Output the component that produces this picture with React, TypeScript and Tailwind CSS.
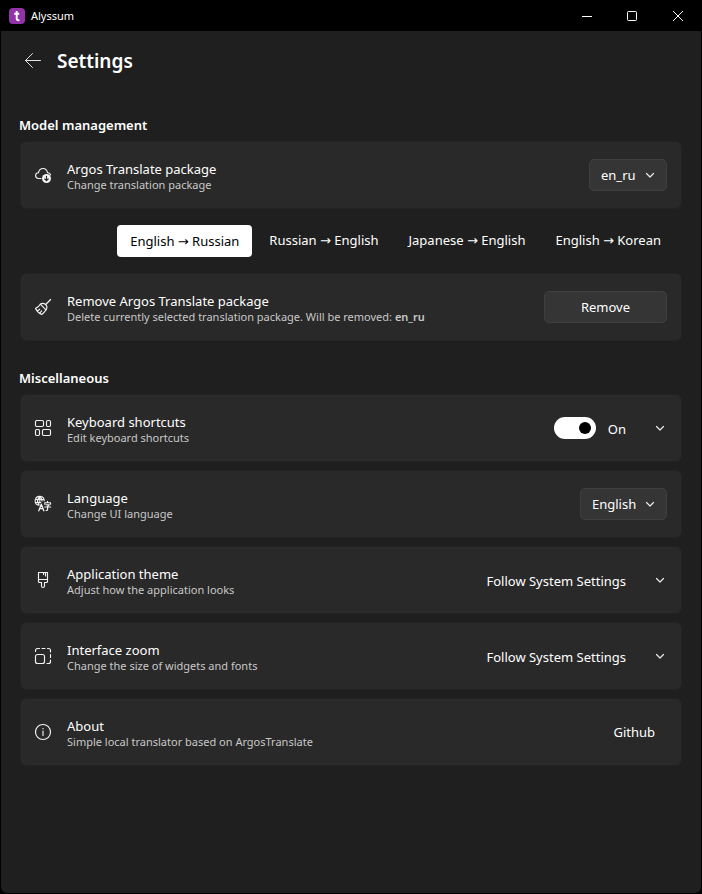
import { useState, type ReactNode } from "react";

type IconProps = { children: ReactNode };

function Icon({ children }: IconProps) {
  return (
    <svg
      className="size-5 shrink-0 text-[#f2f2f2]"
      viewBox="0 0 20 20"
      fill="none"
      stroke="currentColor"
      strokeWidth="1.150"
      strokeLinecap="round"
      strokeLinejoin="round"
      aria-hidden="true"
    >
      {children}
    </svg>
  );
}

const CloudDownIcon = () => (
  <Icon>
    <path d="M8 13.500H5.500A2.900 2.900 0 0 1 5.500 7.700C5.900 5.200 7.700 3.500 10 3.500s4.100 1.700 4.500 4.200c1.500 0 2.700.8 3 2.300" />
    <circle cx="13.500" cy="13.500" r="4.500" fill="currentColor" stroke="none" />
    <path d="M13.500 11.300v4.200M11.800 14l1.700 1.700 1.700-1.700" stroke="#292929" />
  </Icon>
);

const BroomIcon = () => (
  <Icon>
    <path d="M17.600 2.500 12.600 7.500" />
    <path d="M7.300 7.200c1.700-1.200 3.900-.9 5.300.3 1.400 1.400 1.600 3.600.4 5.300-1 1.900-2.300 3.300-4.300 4.600-2.500-1-4.900-3.300-6.100-6 1.800-.8 3.500-2.200 4.700-4.200z" />
    <path d="m7.300 7.200 5.700 5.600M4.700 13.800l2-1.500M6.800 15.900l1.900-2" />
  </Icon>
);

const KeysIcon = () => (
  <Icon>
    <rect x="2.500" y="2.500" width="8" height="6" rx="1.200" />
    <rect x="13.500" y="2.500" width="4" height="6" rx="1.200" />
    <rect x="2.500" y="11.500" width="4" height="6" rx="1.200" />
    <rect x="9.500" y="11.500" width="8" height="6" rx="1.200" />
  </Icon>
);

const LanguageIcon = () => (
  <Icon>
    <path d="M11.200 6.800A4.500 4.500 0 1 0 5.500 11.200M6.800 2.500c-2.600 2.600-2.600 6 -.6 8.500M6.800 2.500c1.600 1.300 2.200 2.600 2.200 4.500M2.600 5.500h8.400M2.600 8.500h5M6.800 2.500v6.500" />
    <path d="m5.800 16.800 2.500-6.600 2.500 6.600M6.700 14.700h3.300" strokeWidth="1.300" />
    <path d="M14.500 7.200v1.300M11.800 10.200V8.700h5.700v1.500M13 10.700h3.300l-1.700 1.500v3.200c0 .8-.5 1.200-1.500 1M11.800 13h5.900" />
  </Icon>
);

const BrushIcon = () => (
  <Icon>
    <path d="M5.500 2.500h9v9c0 .6-.4 1-1 1h-2v3.500a1.500 1.500 0 0 1-3 0v-3.500h-2c-.6 0-1-.4-1-1zM5.500 9.500h9M12.500 2.500V6M10.500 2.500v2" />
  </Icon>
);

const ResizeIcon = () => (
  <Icon>
    <rect x="2.500" y="8.500" width="9" height="9" rx="2" />
    <path d="M2.500 5.500v-1a2 2 0 0 1 2-2H6.500M9 2.500h3M14.500 2.500h1a2 2 0 0 1 2 2V6M17.500 8.500v3M17.500 14v1.500a2 2 0 0 1-2 2H14" />
  </Icon>
);

const InfoIcon = () => (
  <Icon>
    <circle cx="10" cy="10" r="7.500" />
    <path d="M10 9v4.500" />
    <circle cx="10" cy="6.800" r=".7" fill="currentColor" stroke="none" />
  </Icon>
);

function Chevron({ className = "" }: { className?: string }) {
  return (
    <svg
      className={`h-[10px] w-[10px] shrink-0 ${className}`}
      viewBox="0 0 10 10"
      fill="none"
      stroke="#e8e8e8"
      strokeWidth="1.200"
      strokeLinecap="round"
      strokeLinejoin="round"
      aria-hidden="true"
    >
      <path d="m1.500 3.500 3.500 3.500 3.500-3.500" />
    </svg>
  );
}

type CardProps = {
  icon: ReactNode;
  title: string;
  detail: ReactNode;
  children: ReactNode;
};

function Card({ icon, title, detail, children }: CardProps) {
  return (
    <div className="flex h-[68px] items-center rounded-md border border-[#232323] bg-[#292929] pr-[14px] pl-3">
      {icon}
      <div className="ml-[14px] min-w-0 flex-1 pt-[2px]">
        <h3 className="text-[13px] leading-[18px]">{title}</h3>
        <p className="text-[11px] leading-[14px] text-[#c8c8c8]">{detail}</p>
      </div>
      {children}
    </div>
  );
}

function Dropdown({ label, options, className }: { label: string; options: string[]; className: string }) {
  return (
    <div className="relative">
      <select
        aria-label={label}
        className={`h-8 appearance-none rounded-[5px] border border-[#3f3f3f] bg-[#353535] pt-[2px] pl-[11px] text-[13px] text-white ${className}`}
      >
        {options.map((o) => (
          <option key={o}>{o}</option>
        ))}
      </select>
      <Chevron className="pointer-events-none absolute top-[11px] right-3" />
    </div>
  );
}

function Expander({ label, text }: { label: string; text?: string }) {
  return (
    <button type="button" aria-label={label} className="flex items-center pr-[2px] text-[13px] leading-[18px]">
      {text && <span className="pt-[2px]">{text}</span>}
      <Chevron className="ml-[29px]" />
    </button>
  );
}

const pairs = ["English → Russian", "Russian → English", "Japanese → English", "English → Korean"];

export default function App() {
  const [pair, setPair] = useState(pairs[0]);
  const [shortcuts, setShortcuts] = useState(true);

  return (
    <div className="min-h-screen bg-black p-px pt-0 font-['Noto_Sans','DejaVu_Sans',sans-serif] text-white">
      <div className="flex min-h-[calc(100vh-1px)] flex-col">
        <header className="flex h-[31px] items-center pl-2">
          <svg className="size-4" viewBox="0 0 16 16" aria-hidden="true">
            <rect width="16" height="16" rx="4" fill="#9333a8" />
            <path d="M7.700 3v7.400c0 1.500.8 2 2.700 1.700M5.200 5.800h5" fill="none" stroke="#fff" strokeWidth="1.900" />
          </svg>
          <span className="ml-[6px] flex-1 pt-[2px] text-[11px]">Alyssum</span>
          <button type="button" aria-label="Minimize" className="flex h-full w-11 items-center justify-center">
            <svg className="size-[10px]" viewBox="0 0 10 10" stroke="#fff" aria-hidden="true">
              <path d="M0 5.500h10" />
            </svg>
          </button>
          <button type="button" aria-label="Maximize" className="flex h-full w-[46px] items-center justify-center">
            <svg className="size-[10px]" viewBox="0 0 10 10" fill="none" stroke="#fff" aria-hidden="true">
              <rect x=".5" y=".5" width="9" height="9" rx="1" />
            </svg>
          </button>
          <button type="button" aria-label="Close" className="flex h-full w-[46px] items-center justify-center">
            <svg className="size-[10px]" viewBox="0 0 10 10" stroke="#fff" aria-hidden="true">
              <path d="m0 0 10 10M10 0 0 10" />
            </svg>
          </button>
        </header>

        <main className="flex-1 rounded-b-md bg-[#1f1f1f] px-[19px] pb-8">
          <div className="flex h-[60px] items-center gap-[14px] pl-[3px]">
            <button type="button" aria-label="Back">
              <svg className="size-5" viewBox="0 0 20 20" fill="none" stroke="#e4e4e4" strokeLinecap="round" strokeLinejoin="round" aria-hidden="true">
                <path d="M17.500 9.500h-15M9.500 2.500l-7 7 7 7" />
              </svg>
            </button>
            <h1 className="text-[19px] font-semibold">Settings</h1>
          </div>

          <section className="mt-6">
            <h2 className="-ml-px h-[26px] text-[13px] leading-5 font-semibold">Model management</h2>
            <Card icon={<CloudDownIcon />} title="Argos Translate package" detail="Change translation package">
              <Dropdown label="Argos Translate package" options={["en_ru"]} className="w-[78px]" />
            </Card>
            <div className="flex h-16 items-center justify-end gap-1 pr-2">
              {pairs.map((p) => (
                <button
                  key={p}
                  type="button"
                  aria-pressed={p === pair}
                  onClick={() => setPair(p)}
                  className={`h-8 rounded-sm px-[13px] text-[13px] whitespace-nowrap ${p === pair ? "bg-white pt-[2px] text-black" : "text-white"}`}
                >
                  {p}
                </button>
              ))}
            </div>
            <Card
              icon={<BroomIcon />}
              title="Remove Argos Translate package"
              detail={
                <>
                  Delete currently selected translation package. Will be removed: <b className="font-semibold">en_ru</b>
                </>
              }
            >
              <button type="button" className="h-8 w-[123px] rounded-[5px] border border-[#3f3f3f] bg-[#353535] pt-[2px] text-[13px]">
                Remove
              </button>
            </Card>
          </section>

          <section className="mt-[27px]">
            <h2 className="-ml-px h-[26px] text-[13px] leading-5 font-semibold">Miscellaneous</h2>
            <div className="flex flex-col gap-2">
              <Card icon={<KeysIcon />} title="Keyboard shortcuts" detail="Edit keyboard shortcuts">
                <label className="flex items-center gap-3 text-[13px] leading-[18px]">
                  <input
                    type="checkbox"
                    role="switch"
                    aria-label="Keyboard shortcuts"
                    checked={shortcuts}
                    onChange={(e) => setShortcuts(e.target.checked)}
                    className="flex h-[22px] w-[42px] appearance-none items-center rounded-full bg-[#555] px-[5px] before:size-3 before:rounded-full before:bg-black checked:justify-end checked:bg-white"
                  />
                  <span className="pt-[2px]">{shortcuts ? "On" : "Off"}</span>
                </label>
                <Expander label="Show keyboard shortcuts" />
              </Card>
              <Card icon={<LanguageIcon />} title="Language" detail="Change UI language">
                <Dropdown label="Language" options={["English"]} className="w-[87px]" />
              </Card>
              <Card icon={<BrushIcon />} title="Application theme" detail="Adjust how the application looks">
                <Expander label="Application theme: Follow System Settings" text="Follow System Settings" />
              </Card>
              <Card icon={<ResizeIcon />} title="Interface zoom" detail="Change the size of widgets and fonts">
                <Expander label="Interface zoom: Follow System Settings" text="Follow System Settings" />
              </Card>
              <Card icon={<InfoIcon />} title="About" detail="Simple local translator based on ArgosTranslate">
                <a href="#github" className="mr-3 text-[13px] leading-[18px]">
                  Github
                </a>
              </Card>
            </div>
          </section>
        </main>
      </div>
    </div>
  );
}
